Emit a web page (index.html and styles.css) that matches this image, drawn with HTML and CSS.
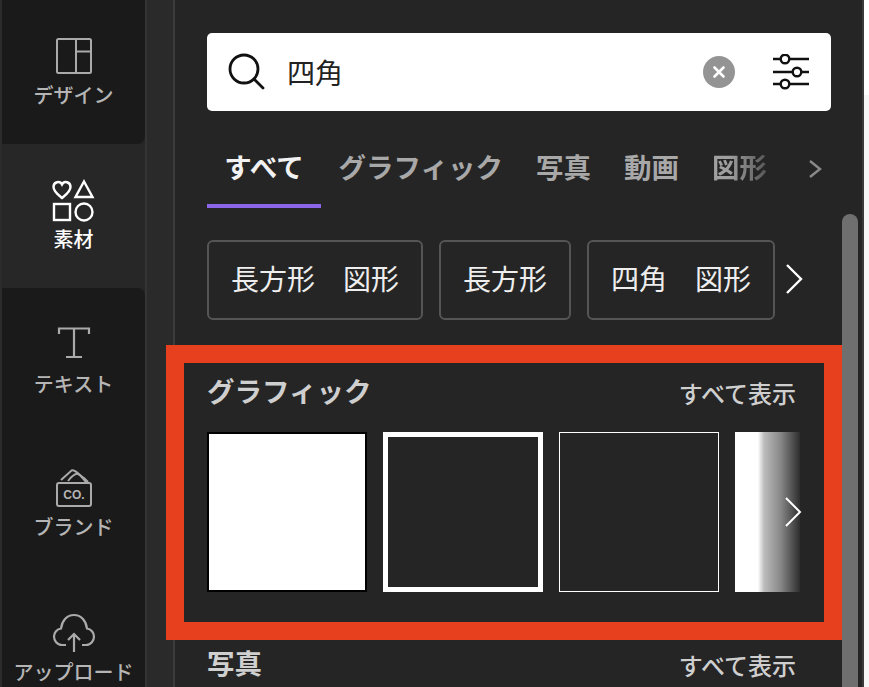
FILE: index.html
```html
<!DOCTYPE html>
<html lang="ja">
<head>
	<meta charset="utf-8">
	<title>素材</title>
	<link rel="stylesheet" href="styles.css">
</head>
<body>
	<div class="editor">
		<!-- 左のナビ -->
		<nav class="rail">
			<a class="rail_item item_design">
				<svg class="rail_icon" width="36" height="36" viewBox="0 0 36 36" fill="none" stroke="#aaa" stroke-width="2"><rect x="1" y="1" width="34" height="34" rx="1.500"/><path d="M20 1v34M20 13.500h15"/></svg>
				<span>デザイン</span>
			</a>
			<a class="rail_item active">
				<svg class="rail_icon" width="46" height="46" viewBox="0 0 46 46" fill="none" stroke="#fff" stroke-width="2.400"><path d="M11 20c-4-3.400-8.500-6.500-8.500-11 0-5 6.400-6.800 8.500-2.600C13.100 2.200 19.500 4 19.500 9c0 4.500-4.500 7.600-8.500 11z"/><path d="M33 3.500 41.500 19h-17z"/><rect x="3" y="26" width="16" height="16"/><circle cx="33" cy="34" r="8.500"/></svg>
				<span>素材</span>
			</a>
			<a class="rail_item item_text">
				<svg class="rail_icon" width="34" height="34" viewBox="0 0 34 34" fill="none" stroke="#aaa" stroke-width="2.200"><path d="M2 8V2.500h30V8M17 2.500V31M9 31h16"/></svg>
				<span>テキスト</span>
			</a>
			<a class="rail_item item_brand">
				<svg class="rail_icon" width="38" height="40" viewBox="0 0 38 40" fill="none" stroke="#aaa" stroke-width="2"><path d="M6 12 16.500 2.500C20 1 24 7 29 10l4 4"/><path d="M13 13c4-5 7-8 10-7 3 1 5 5 8 8"/><rect x="2" y="15" width="34" height="23" rx="2"/><text x="19" y="31" text-anchor="middle" class="co_text" stroke="none">CO.</text></svg>
				<span>ブランド</span>
			</a>
			<a class="rail_item item_upload">
				<svg class="rail_icon" width="44" height="40" viewBox="0 0 44 40" fill="none" stroke="#aaa" stroke-width="2.200"><path d="M14 32H10C5 32 2 27.500 2 23.500c0-4 3-7.500 7-8C10 7.500 15 2 22 2s12 5.500 13 13.500c4 .5 7 4 7 8 0 4-3 8.500-8 8.500h-4"/><path d="M22 39V21M16 27l6-6 6 6"/></svg>
				<span>アップロード</span>
			</a>
		</nav>

		<div class="gutter"></div>

		<!-- 素材パネル -->
		<main class="panel">
			<div class="search">
				<svg width="40" height="40" viewBox="0 0 40 40" fill="none" stroke="#111" stroke-width="2.800"><circle cx="17" cy="17" r="14"/><path d="M27 27l9 9" stroke-linecap="round"/></svg>
				<span class="search_word">四角</span>
				<span class="clear">
					<svg width="14" height="14" viewBox="0 0 14 14" stroke="#fff" stroke-width="2.600" stroke-linecap="round"><path d="M2.500 2.500l9 9M11.500 2.500l-9 9"/></svg>
				</span>
				<svg width="36" height="36" viewBox="0 0 36 36" fill="none" stroke="#111" stroke-width="2.400"><path d="M0 5h7.500M16.500 5H36M0 18h19.500M28.500 18H36M0 30h7.500M16.500 30H36"/><circle cx="12" cy="5" r="4.300"/><circle cx="24" cy="18" r="4.300"/><circle cx="12" cy="30" r="4.300"/></svg>
			</div>

			<div class="tabs">
				<a class="tab tab_on">すべて</a>
				<a class="tab">グラフィック</a>
				<a class="tab">写真</a>
				<a class="tab">動画</a>
				<a class="tab"><span class="tab_fade">図形</span></a>
				<svg class="tab_next" width="14" height="20" viewBox="0 0 14 20" fill="none" stroke="#8a8a8a" stroke-width="2.400"><path d="M2 2l10 8-10 8"/></svg>
			</div>

			<div class="chips">
				<a class="chip">長方形　図形</a>
				<a class="chip">長方形</a>
				<a class="chip">四角　図形</a>
				<svg class="chip_next" width="18" height="32" viewBox="0 0 18 32" fill="none" stroke="#fff" stroke-width="2.400"><path d="M2 2l14 14L2 30"/></svg>
			</div>

			<section class="graphics">
				<div class="sec_head">
					<h2>グラフィック</h2>
					<a>すべて表示</a>
				</div>
				<div class="thumbs">
					<div class="thumb thumb_white"></div>
					<div class="thumb thumb_thick"></div>
					<div class="thumb thumb_thin"></div>
					<div class="thumb_cut">
						<svg width="18" height="32" viewBox="0 0 18 32" fill="none" stroke="#fff" stroke-width="2"><path d="M2 2l14 14L2 30"/></svg>
					</div>
				</div>
			</section>

			<div class="sec_head photos">
				<h2>写真</h2>
				<a>すべて表示</a>
			</div>
		</main>

		<div class="scroll">
			<div class="thumb_bar"></div>
		</div>
		<div class="edge"></div>
	</div>
</body>
</html>
```

FILE: styles.css
```css
* {
	box-sizing: border-box;
}

html, body {
	margin: 0;
	height: 100%;
	overflow: hidden;
}

body {
	background: #252525;
	font-family: "Noto Sans CJK JP", "Liberation Sans", sans-serif;
}

.editor {
	display: flex;
	width: 869px;
	height: 687px;
	overflow: hidden;
}

/* left rail */
.rail {
	width: 145px;
	flex: none;
	display: flex;
	flex-direction: column;
	background: #252525;
	border-left: 2px solid #2b2b2b;
}

.rail_item {
	height: 144px;
	flex: none;
	display: flex;
	flex-direction: column;
	align-items: center;
	background: #1a1a1a;
	color: #b5b5b5;
	font-size: 20px;
	font-weight: 500;
	line-height: 26px;
}

.rail_icon {
	display: block;
}

.item_design {
	padding-top: 38px;
	gap: 8px;
	border-bottom-right-radius: 8px;
}

.active {
	background: #272727;
	color: #fff;
	padding-top: 34px;
	gap: 2px;
}

.item_text {
	padding-top: 38px;
	gap: 11px;
	border-top-right-radius: 8px;
}

.item_brand {
	padding-top: 36px;
	gap: 6px;
}

.item_upload {
	padding-top: 37px;
	gap: 6px;
}

.co_text {
	font: 700 12px "Liberation Sans", sans-serif;
	fill: #b5b5b5;
}

.gutter {
	width: 30px;
	flex: none;
	background: #2a2a2a;
	border-left: 2px solid #343434;
	border-right: 2px solid #3c3c3c;
}

/* search panel */
.panel {
	width: 667px;
	flex: none;
	padding: 33px 11px 0 32px;
}

.search {
	height: 78px;
	width: 624px;
	display: flex;
	align-items: center;
	background: #fff;
	border-radius: 5px;
	padding: 0 22px 0 20px;
	color: #222;
}

.search_word {
	margin-left: 20px;
	font-size: 28px;
	flex: 1;
}

.clear {
	width: 32px;
	height: 32px;
	border-radius: 50%;
	background: #949494;
	display: flex;
	align-items: center;
	justify-content: center;
	margin-right: 38px;
}

.tabs {
	display: flex;
	height: 78px;
	margin-top: 19px;
	font-size: 27.500px;
	font-weight: 700;
	color: #a8a8a8;
}

.tab {
	padding: 0 16.500px;
	line-height: 72px;
}

.tab_on {
	width: 114px;
	padding: 0;
	margin-right: 1px;
	text-align: center;
	color: #f2f2f2;
	border-bottom: 4px solid #8b66e8;
}

.tab_fade {
	color: transparent;
	background: linear-gradient(90deg, #a0a0a0 30%, #555 100%);
	-webkit-background-clip: text;
	background-clip: text;
}

.tab_next {
	align-self: center;
	margin-left: 25px;
}

.chips {
	display: flex;
	align-items: center;
	gap: 16px;
	margin-top: 32px;
}

.chip {
	height: 80px;
	display: flex;
	align-items: center;
	justify-content: center;
	border: 2px solid #555;
	border-radius: 6px;
	font-size: 28px;
	color: #eee;
	padding: 0 22px 4px;
}

.chip_next {
	margin: -2px 0 0 -6px;
}

/* red frame round the graphics row */
.graphics {
	width: 676px;
	height: 295px;
	margin: 25px 0 0 -41px;
	border: 18px solid #e6401f;
	padding: 8px 24px 0 23px;
}

.graphics .sec_head {
	padding-right: 4px;
}

.sec_head {
	display: flex;
	justify-content: space-between;
	align-items: center;
	color: #cfcfcf;
	height: 42px;
}

.sec_head h2 {
	margin: 0 0 4px;
	font-size: 27.500px;
	font-weight: 700;
}

.sec_head a {
	font-size: 24px;
	font-weight: 500;
}

.thumbs {
	display: flex;
	gap: 16px;
	margin-top: 19px;
}

.thumb {
	width: 160px;
	height: 160px;
	flex: none;
}

.thumb_white {
	background: #fff;
	border: 2px solid #000;
}

.thumb_thick {
	border: 5px solid #fff;
}

.thumb_thin {
	border: 1px solid #fff;
}

.thumb_cut {
	width: 65px;
	height: 160px;
	flex: none;
	display: flex;
	align-items: center;
	justify-content: flex-end;
	background: linear-gradient(90deg, #fff 0%, #fff 35%, #bbb 45%, #888 70%, #2e2e2e 100%);
}

.thumb_cut svg {
	margin-right: -2px;
}

.photos {
	width: 589px;
	margin-top: 3px;
}

/* scrollbar */
.scroll {
	width: 22px;
	flex: none;
	padding-top: 214px;
	border-right: 2px solid #3a3a3a;
}

.thumb_bar {
	width: 16px;
	height: 480px;
	background: #6f6f6f;
	border-radius: 8px 8px 0 0;
}

.edge {
	flex: none;
	width: 5px;
	background: linear-gradient(#fff 95px, #f6f6f6 95px);
}
```
